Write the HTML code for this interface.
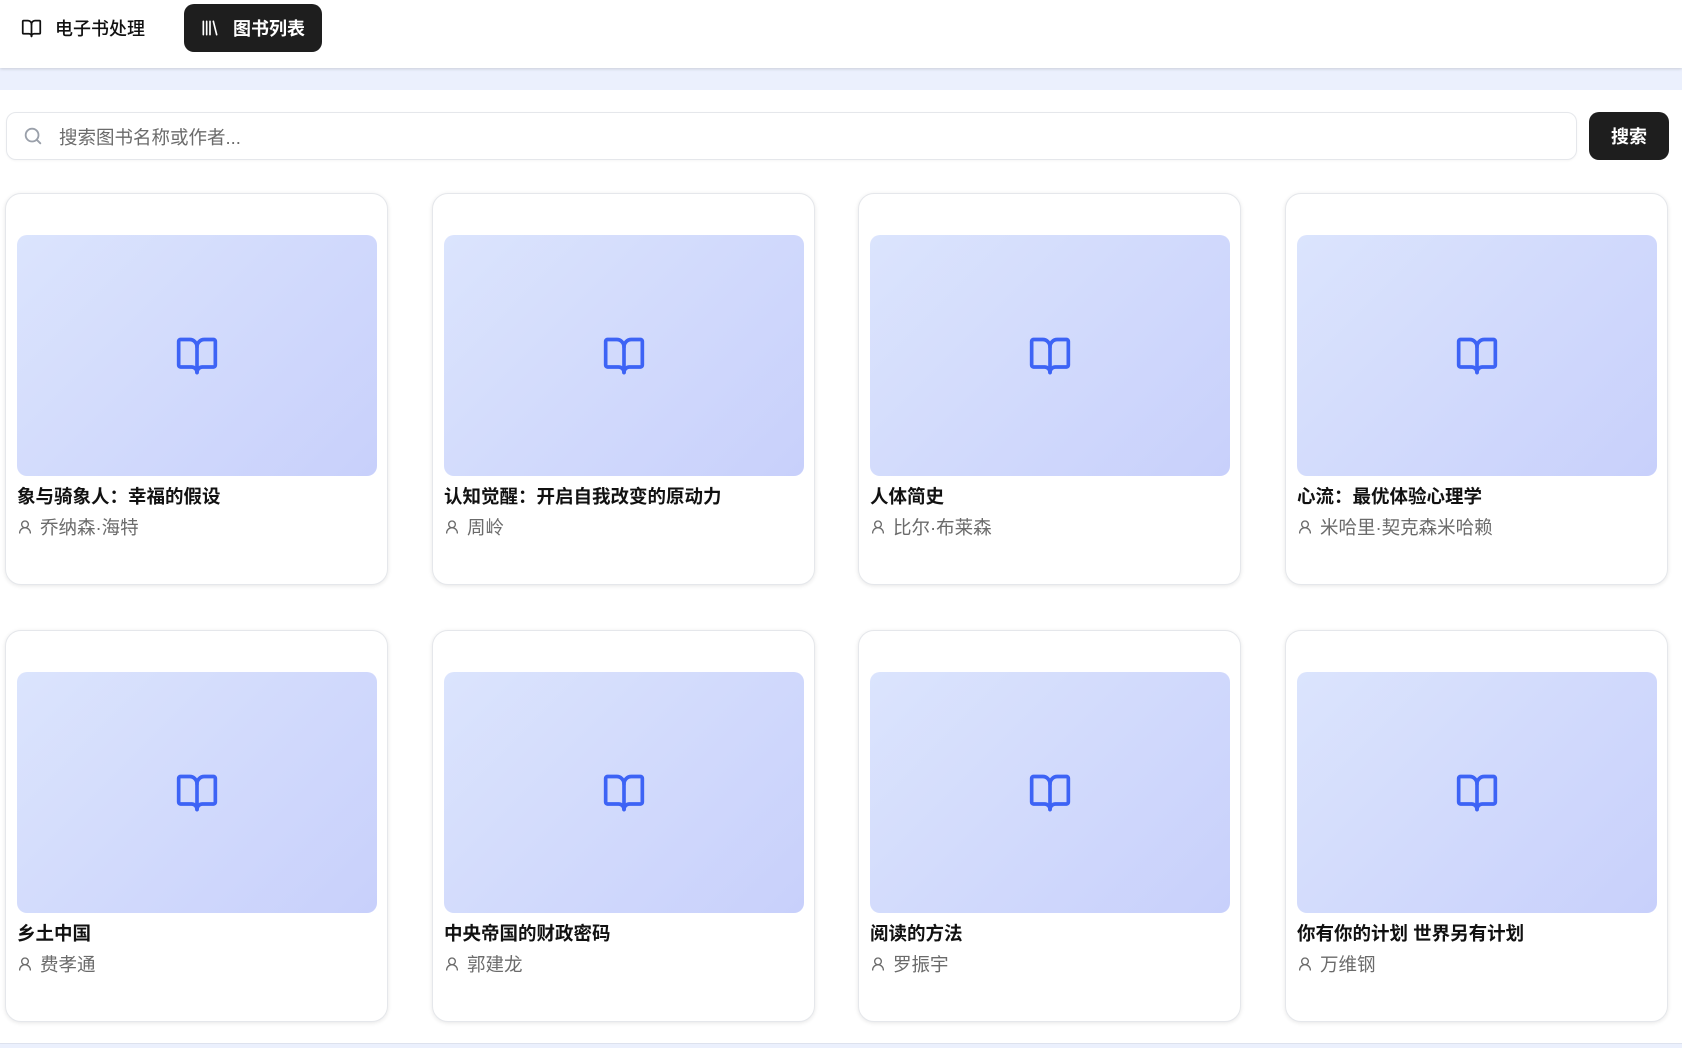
<!DOCTYPE html>
<html><head><meta charset="utf-8"><style>
*{box-sizing:border-box;margin:0;padding:0}
body{width:1682px;height:1048px;overflow:hidden;background:#fff;font-family:"Liberation Sans","Noto Sans CJK SC",sans-serif;position:relative}
.nav{position:absolute;left:0;top:0;width:1682px;height:68px;background:#fff;box-shadow:0 1px 3px rgba(0,0,0,.15);z-index:2}
.band{position:absolute;left:0;top:68px;width:1682px;height:22px;background:#ebf0fd}
.bband{position:absolute;left:0;top:1043px;width:1682px;height:5px;background:#ebf0fd;border-top:1px solid #dde2ee}
.ni{position:absolute;top:4px;height:48px;display:flex;align-items:center;font-size:18px;color:#111;font-weight:500}
.ni svg{margin-right:13px}
.act{left:184px;width:138px;background:#1e1e1e;color:#fff;border-radius:10px;padding-left:16px;font-weight:bold}
.search{position:absolute;left:6px;top:112px;width:1571px;height:48px;border:1px solid #e5e7eb;border-radius:10px;box-shadow:0 1px 2px rgba(0,0,0,.04)}
.search svg{position:absolute;left:15px;top:12px}
.search span{position:absolute;left:52px;top:11px;font-size:18.5px;color:#6b6b6b}
.btn{position:absolute;left:1589px;top:112px;width:80px;height:48px;background:#1e1e1e;border-radius:10px;color:#fff;font-weight:bold;font-size:18px;display:flex;align-items:center;justify-content:center}
.card{position:absolute;width:383px;height:392px;border:1px solid #e5e7eb;border-radius:16px;box-shadow:0 1px 4px rgba(0,0,0,.1);background:#fff}
.img{position:absolute;left:11px;top:41px;width:360px;height:241px;border-radius:10px;background:linear-gradient(135deg,#dbe4fd,#c8d0fb);display:flex;align-items:center;justify-content:center}
.t{position:absolute;left:11px;top:289px;font-size:18.5px;font-weight:bold;color:#111}
.a{position:absolute;left:11px;top:320px;font-size:18.5px;color:#6b6b6b;display:flex;align-items:center}
.a svg{margin-right:7px}
</style></head><body>
<div class="nav">
<div class="ni" style="left:21px"><svg width="21" height="21" viewBox="0 0 24 24" fill="none" stroke="#111" stroke-width="2" stroke-linecap="round" stroke-linejoin="round"><path d="M12 7v14"/><path d="M3 18a1 1 0 0 1-1-1V4a1 1 0 0 1 1-1h5a4 4 0 0 1 4 4 4 4 0 0 1 4-4h5a1 1 0 0 1 1 1v13a1 1 0 0 1-1 1h-6a3 3 0 0 0-3 3 3 3 0 0 0-3-3z"/></svg>电子书处理</div>
<div class="ni act"><svg width="20" height="20" viewBox="0 0 24 24" fill="none" stroke="#fff" stroke-width="2" stroke-linecap="round"><path d="M4 4v16M8 4v16M12 4v16M16 4l4 16"/></svg>图书列表</div>
</div>
<div class="band"></div>
<div class="search"><svg width="22" height="22" viewBox="0 0 24 24" fill="none" stroke="#9aa0aa" stroke-width="2" stroke-linecap="round"><circle cx="11" cy="11" r="7"/><path d="m20 20-4-4"/></svg><span>搜索图书名称或作者...</span></div>
<div class="btn">搜索</div>
<div id="g"></div>
<script>
var d=[["象与骑象人：幸福的假设","乔纳森·海特"],["认知觉醒：开启自我改变的原动力","周岭"],["人体简史","比尔·布莱森"],["心流：最优体验心理学","米哈里·契克森米哈赖"],["乡土中国","费孝通"],["中央帝国的财政密码","郭建龙"],["阅读的方法","罗振宇"],["你有你的计划 世界另有计划","万维钢"]];
var xs=[5,432,858,1285],ys=[193,630],h="";
var bk='<svg width="44" height="44" viewBox="0 0 24 24" fill="none" stroke="#3d63f5" stroke-width="2" stroke-linecap="round" stroke-linejoin="round"><path d="M12 7v14"/><path d="M3 18a1 1 0 0 1-1-1V4a1 1 0 0 1 1-1h5a4 4 0 0 1 4 4 4 4 0 0 1 4-4h5a1 1 0 0 1 1 1v13a1 1 0 0 1-1 1h-6a3 3 0 0 0-3 3 3 3 0 0 0-3-3z"/></svg>';
var us='<svg width="16" height="16" viewBox="0 0 24 24" fill="none" stroke="#6b6b6b" stroke-width="2" stroke-linecap="round"><circle cx="12" cy="8" r="5"/><path d="M20 21a8 8 0 0 0-16 0"/></svg>';
for(var i=0;i<8;i++){h+='<div class="card" style="left:'+xs[i%4]+'px;top:'+ys[i>>2]+'px"><div class="img">'+bk+'</div><div class="t">'+d[i][0]+'</div><div class="a">'+us+d[i][1]+'</div></div>';}
document.getElementById("g").innerHTML=h;
</script>
<div class="bband"></div>
</body></html>
